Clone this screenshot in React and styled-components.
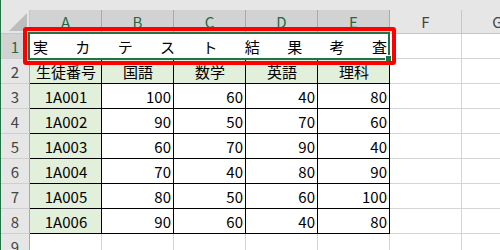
import React from 'react'
import styled, { createGlobalStyle } from 'styled-components'

const GlobalStyle = createGlobalStyle`
  html, body {
    margin: 0;
    padding: 0;
    background: #ffffff;
  }
`

const COLUMNS = ['A', 'B', 'C', 'D', 'E', 'F', 'G']
const SELECTED_COLS = 5
const TITLE = ['実', 'カ', 'テ', 'ス', 'ト', '結', '果', '考', '査']
const HEADINGS = ['生徒番号', '国語', '数学', '英語', '理科']
const SCORES = [
  ['1A001', 100, 60, 40, 80],
  ['1A002', 90, 50, 70, 60],
  ['1A003', 60, 70, 90, 40],
  ['1A004', 70, 40, 80, 90],
  ['1A005', 80, 50, 60, 100],
  ['1A006', 90, 60, 40, 80],
]

const App = () => {
  const emptyTail = (key) =>
    COLUMNS.slice(SELECTED_COLS).map((c) => <Cell key={`${key}-${c}`} />)

  return (
    <>
      <GlobalStyle />
      <Sheet>
        <TopBand />
        {/* header row */}
        <Corner>
          <CornerTriangle />
        </Corner>
        {COLUMNS.map((c, i) => (
          <ColHead key={c} $active={i < SELECTED_COLS}>
            {c}
          </ColHead>
        ))}

        {/* row 1: title, distributed across A:E */}
        <RowHead $active>1</RowHead>
        <TitleCell>
          {TITLE.map((ch, i) => (
            <span key={i}>{ch}</span>
          ))}
        </TitleCell>
        {emptyTail('r1')}

        {/* row 2: headings */}
        <RowHead>2</RowHead>
        {HEADINGS.map((h) => (
          <Cell key={h} $boxed $fill $align='center'>
            {h}
          </Cell>
        ))}
        {emptyTail('r2')}

        {/* rows 3-8: scores */}
        {SCORES.map((row, r) => (
          <React.Fragment key={row[0]}>
            <RowHead>{r + 3}</RowHead>
            {row.map((v, i) => (
              <Cell key={i} $boxed $fill={i === 0} $align={i === 0 ? 'center' : 'flex-end'}>
                {v}
              </Cell>
            ))}
            {emptyTail(`r${r + 3}`)}
          </React.Fragment>
        ))}

        {/* row 9 */}
        <RowHead>9</RowHead>
        {COLUMNS.map((c) => (
          <Cell key={`r9-${c}`} />
        ))}

        {/* overlays: selection and red callout */}
        <Selection>
          <FillHandle />
        </Selection>
        <Callout />
      </Sheet>
    </>
  )
}

export default App

// styling
const Sheet = styled.div`
  position: relative;
  width: 500px;
  height: 250px;
  overflow: hidden;
  box-sizing: border-box;
  border-left: 1px solid #217346;
  display: grid;
  grid-template-columns: 29px repeat(7, 72px);
  grid-template-rows: 10px 24px repeat(9, 25px);
  background: #ffffff;
  font-family: 'Noto Sans CJK JP', 'Noto Sans', sans-serif;
  font-size: 15px;
  color: #000000;
`
const TopBand = styled.div`
  grid-column: 1 / -1;
  background: #e6e6e6;
`
const Corner = styled.div`
  position: relative;
  box-sizing: border-box;
  background: #e6e6e6;
  border-right: 1px solid #c6c6c6;
  border-bottom: 1px solid #c6c6c6;
`
const CornerTriangle = styled.div`
  position: absolute;
  right: 2px;
  bottom: 2px;
  width: 18px;
  height: 18px;
  background: #bdbdbd;
  clip-path: polygon(100% 0, 100% 100%, 0 100%);
`
const ColHead = styled.div`
  box-sizing: border-box;
  display: flex;
  align-items: center;
  justify-content: center;
  background: ${(p) => (p.$active ? '#d2d2d2' : '#e6e6e6')};
  color: ${(p) => (p.$active ? '#1e6b41' : '#444444')};
  border-right: 1px solid ${(p) => (p.$active ? '#a9a9a9' : '#c6c6c6')};
  border-bottom: 1px solid #c6c6c6;
  font-size: 15px;
  line-height: 1;
`
const RowHead = styled.div`
  box-sizing: border-box;
  display: flex;
  align-items: center;
  justify-content: center;
  background: ${(p) => (p.$active ? '#d2d2d2' : '#e6e6e6')};
  color: ${(p) => (p.$active ? '#1e6b41' : '#444444')};
  border-right: 1px solid #a9a9a9;
  border-bottom: 1px solid #cfcfcf;
  font-size: 15px;
  line-height: 1;
`
const Cell = styled.div`
  box-sizing: border-box;
  display: flex;
  align-items: center;
  justify-content: ${(p) => p.$align || 'flex-start'};
  padding: 0 2px 0 3px;
  background: ${(p) => (p.$fill ? '#e2efda' : '#ffffff')};
  border-right: 1px solid ${(p) => (p.$boxed ? '#000000' : '#d4d4d4')};
  border-bottom: 1px solid ${(p) => (p.$boxed ? '#000000' : '#d4d4d4')};
  line-height: 1;
  white-space: nowrap;
`
const TitleCell = styled.div`
  grid-column: span 5;
  box-sizing: border-box;
  display: flex;
  align-items: center;
  justify-content: space-between;
  padding: 0 2px 0 3px;
  border-right: 1px solid #000000;
  border-bottom: 1px solid #000000;
  line-height: 1;
`
const Selection = styled.div`
  position: absolute;
  left: 27px;
  top: 32px;
  width: 362px;
  height: 28px;
  box-sizing: border-box;
  border: 2px solid #217346;
  pointer-events: none;
`
const FillHandle = styled.div`
  position: absolute;
  right: -4px;
  bottom: -4px;
  width: 5px;
  height: 5px;
  background: #217346;
  border: 1px solid #ffffff;
`
const Callout = styled.div`
  position: absolute;
  left: 22px;
  top: 27px;
  width: 373px;
  height: 38px;
  box-sizing: border-box;
  border: 4px solid #ff0000;
  border-radius: 3px;
  pointer-events: none;
`
